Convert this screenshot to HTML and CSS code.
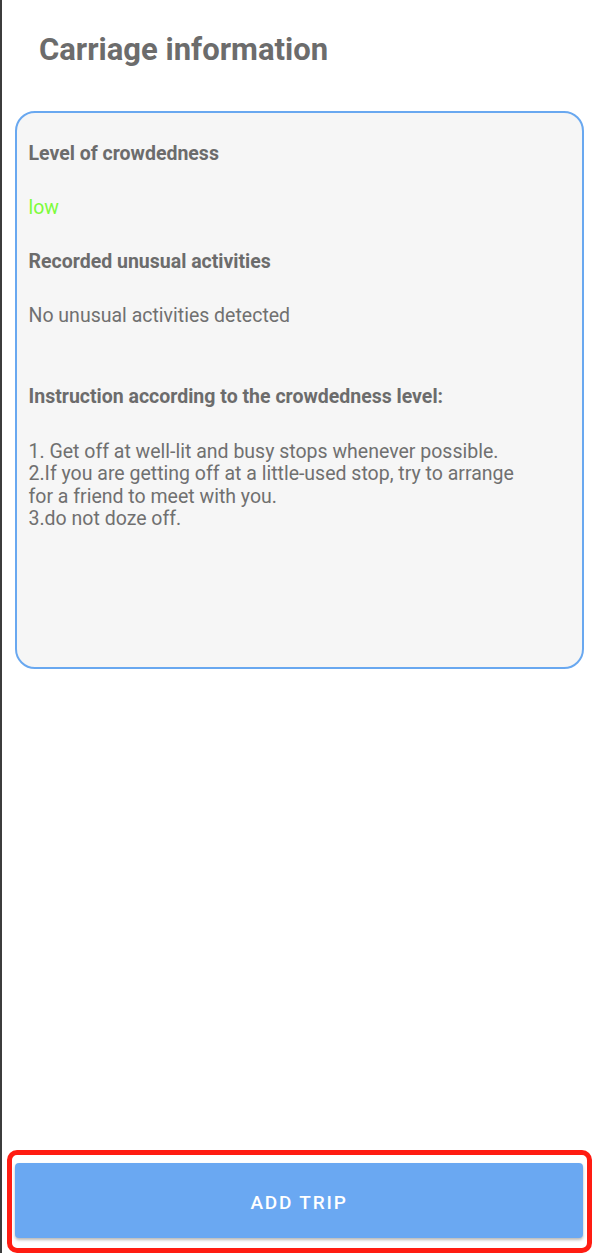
FILE: index.html
```html
<!DOCTYPE html>
<html lang="en">
<head>
<meta charset="utf-8">
<title>Carriage information</title>
<link rel="stylesheet" href="styles.css">
</head>
<body>
<div class="page">
  <h1 class="title">Carriage information</h1>
  <section class="card">
    <h2 class="label">Level of crowdedness</h2>
    <p class="value low">low</p>
    <h2 class="label">Recorded unusual activities</h2>
    <p class="value">No unusual activities detected</p>
    <h2 class="label instr">Instruction according to the crowdedness level:</h2>
    <p class="list">1. Get off at well-lit and busy stops whenever possible.<br>2.If you are getting off at a little-used stop, try to arrange<br>for a friend to meet with you.<br>3.do not doze off.</p>
  </section>
  <div class="spacer"></div>
  <div class="highlight">
    <button class="btn" type="button">ADD TRIP</button>
  </div>
</div>
</body>
</html>
```
FILE: styles.css
```css
html, body {
  margin: 0;
  padding: 0;
  background: #ffffff;
}
body {
  font-family: Roboto, "Liberation Sans", Arial, sans-serif;
  width: 595px;
  height: 1259px;
  overflow: hidden;
}
.page {
  box-sizing: border-box;
  height: 1253px;
  border-left: 2px solid #3c3c3c;
  display: flex;
  flex-direction: column;
}
.title {
  margin: 32px 0 0 37px;
  font-size: 31px;
  line-height: 36px;
  font-weight: 700;
  color: #6c6c6c;
}
.card {
  box-sizing: border-box;
  margin: 43px 0 0 13px;
  width: 569px;
  height: 558px;
  border: 2.5px solid #69a8f0;
  border-radius: 20px;
  background: #f6f6f6;
  padding: 30px 12px 0 11.5px;
}
.label {
  margin: 0;
  font-size: 19.5px;
  line-height: 22px;
  font-weight: 700;
  color: #6c6c6c;
}
.value {
  margin: 32px 0 32px 0;
  font-size: 19.5px;
  line-height: 22px;
  color: #707070;
}
.value.low {
  color: #7dfb3b;
}
.label.instr {
  margin-top: 59px;
}
.list {
  margin: 33px 0 0 0;
  font-size: 19.5px;
  line-height: 22.4px;
  color: #707070;
}
.spacer {
  flex: 1;
}
.highlight {
  box-sizing: border-box;
  margin: 0 3px 0 5px;
  height: 103px;
  border: 5px solid #ff1c12;
  border-radius: 10px;
  padding: 8px 4px 10px 3px;
  display: flex;
}
.btn {
  flex: 1;
  border: none;
  border-radius: 4px;
  background: #6aa8f2;
  box-shadow: 0 2px 3px rgba(0, 0, 0, 0.28);
  color: #ffffff;
  font-family: Roboto, "Liberation Sans", Arial, sans-serif;
  font-size: 19px;
  font-weight: 500;
  letter-spacing: 1.8px;
  padding: 3px 0 0 0;
}
```
